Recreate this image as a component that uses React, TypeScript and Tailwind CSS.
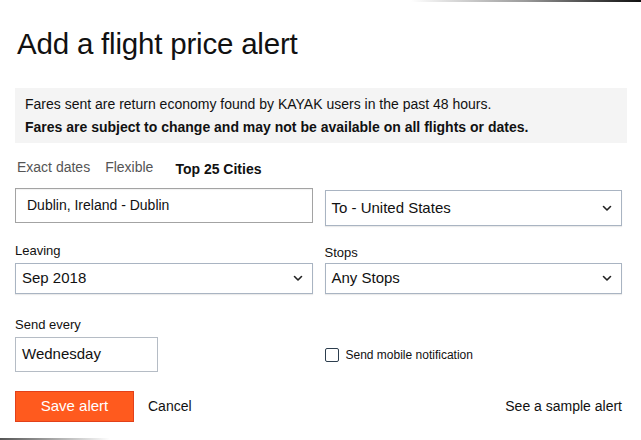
import React from "react";

function Chevron() {
  return (
    <svg width="10" height="7" viewBox="0 0 10 7" className="shrink-0">
      <polyline
        points="1.5,1.5 5,5 8.5,1.5"
        fill="none"
        stroke="#222"
        strokeWidth="1.6"
        strokeLinecap="round"
        strokeLinejoin="round"
      />
    </svg>
  );
}

function SelectBox({ value, className }: { value: string; className: string }) {
  return (
    <div
      className={
        "flex items-center justify-between border border-[#a9b4c2] bg-white pl-[6px] pr-[9px] shadow-[0_1px_1px_rgba(0,0,0,0.08)] " +
        className
      }
    >
      <span className="text-[15px] text-[#111]">{value}</span>
      <Chevron />
    </div>
  );
}

export default function App() {
  return (
    <div
      className="w-[641px] h-[440px] bg-white flex flex-col overflow-hidden"
      style={{ fontFamily: '"Liberation Sans", Arial, sans-serif' }}
    >
      <div className="flex justify-end h-[2px]">
        <div className="w-[230px] h-[2px] bg-gradient-to-r from-[#ffffff] via-[#9a9a9a] to-[#111]" />
      </div>

      <div className="flex-1 pl-[15px] pr-[19px]">
        <h1 className="mt-[24px] ml-[2px] text-[29.5px] leading-[36px] text-[#111] tracking-[-0.2px]">
          Add a flight price alert
        </h1>

        <div className="mt-[26px] -mr-[5px] bg-[#f4f4f4] pl-[10px] pt-[5px] pb-[4px] text-[14px] leading-[23px] text-[#111]">
          <p>Fares sent are return economy found by KAYAK users in the past 48 hours.</p>
          <p className="font-bold">Fares are subject to change and may not be available on all flights or dates.</p>
        </div>

        <div className="mt-[15px] ml-[2px] flex items-end gap-[15px] text-[14px] leading-[18px]">
          <span className="text-[#555]">Exact dates</span>
          <span className="text-[#555]">Flexible</span>
          <span className="ml-[7px] font-bold text-[#111] translate-y-[2px]">Top 25 Cities</span>
        </div>

        <div className="mt-[12px] grid grid-cols-2 gap-x-[12px]">
          <div className="h-[35px] flex items-center border border-[#a3a3a3] pl-[11px] text-[14px] text-[#111] shadow-[inset_0_1px_1px_rgba(0,0,0,0.06)]">
            Dublin, Ireland - Dublin
          </div>
          <SelectBox value="To - United States" className="h-[36px] mt-[2px]" />

          <div className="mt-[17px] text-[13px] leading-[16px] text-[#111]">Leaving</div>
          <div className="mt-[19px] text-[13px] leading-[16px] text-[#111]">Stops</div>

          <SelectBox value="Sep 2018" className="h-[31px] mt-[2px]" />
          <SelectBox value="Any Stops" className="h-[31px] mt-[2px]" />
        </div>

        <div className="mt-[23px] text-[13px] leading-[16px] text-[#111]">Send every</div>

        <div className="mt-[4px] grid grid-cols-2 gap-x-[12px] items-center">
          <div className="w-[143px] h-[35px] flex items-center border border-[#b5bcc5] pl-[6px] text-[15px] text-[#111]">
            Wednesday
          </div>
          <label className="flex items-center gap-[7px]">
            <span className="w-[14px] h-[14px] border-[1.5px] border-[#2d3e4e] rounded-[2px] bg-white" />
            <span className="text-[12px] text-[#111]">Send mobile notification</span>
          </label>
        </div>

        <div className="mt-[19px] flex items-center">
          <button className="w-[119px] h-[31px] bg-[#ff5a1e] border border-[#e2401a] text-white text-[15px]">
            Save alert
          </button>
          <span className="ml-[14px] text-[14px] text-[#111]">Cancel</span>
          <span className="ml-auto text-[14px] text-[#111]">See a sample alert</span>
        </div>
      </div>

      <div className="flex h-[2px]">
        <div className="w-[110px] h-[2px] bg-gradient-to-r from-[#555] via-[#aaa] to-[#fff]" />
      </div>
    </div>
  );
}
